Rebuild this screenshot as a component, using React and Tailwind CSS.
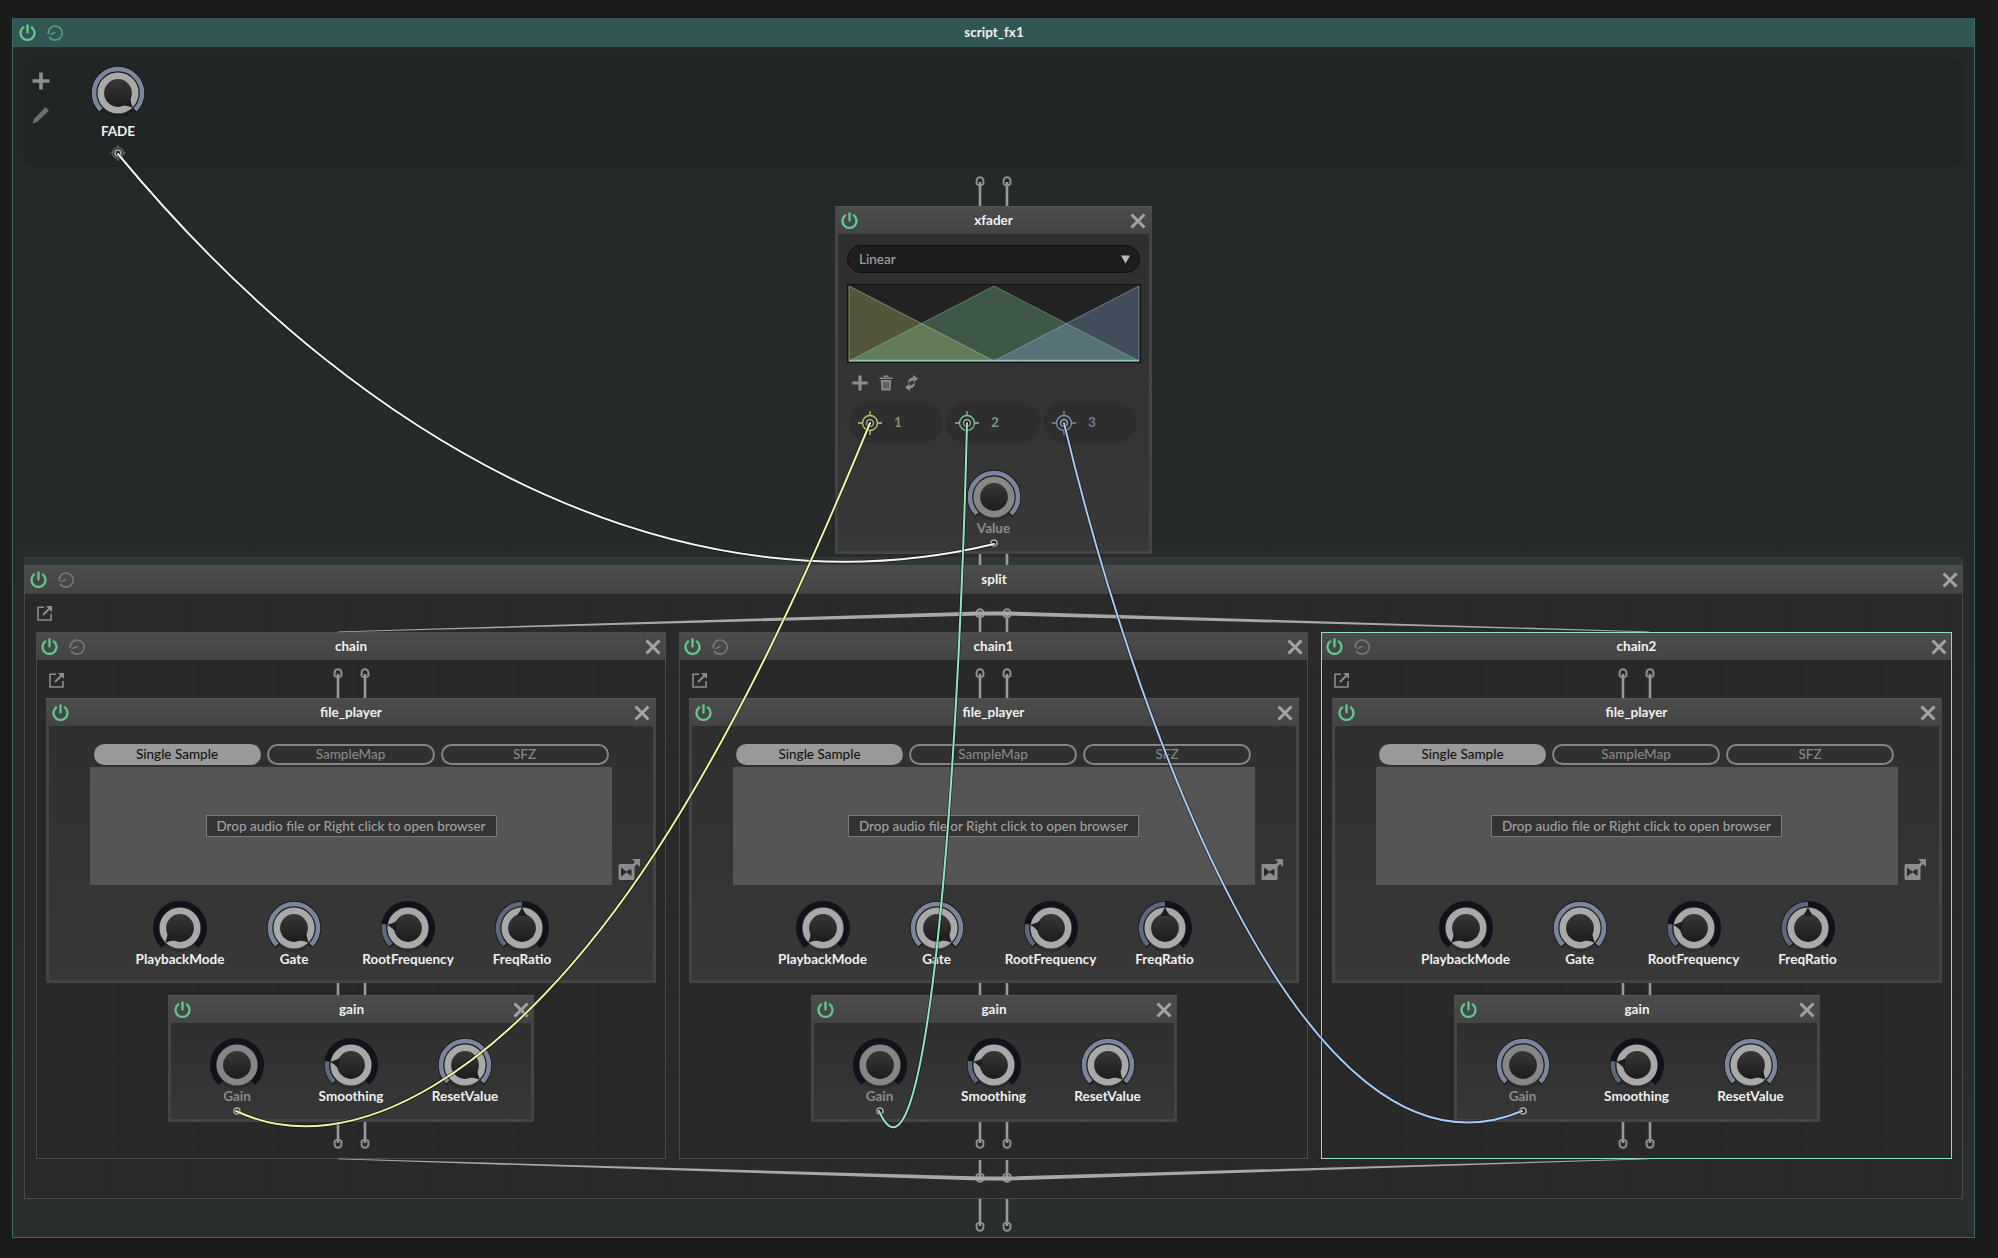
import React, { useId } from "react";

const polar = (r, deg) => {
  const a = ((deg - 90) * Math.PI) / 180;
  return [27 + r * Math.cos(a), 27 + r * Math.sin(a)];
};
const arc = (r, from, to) => {
  const [x1, y1] = polar(r, from);
  const [x2, y2] = polar(r, to);
  return `M${x1} ${y1}A${r} ${r} 0 ${to - from > 180 ? 1 : 0} 1 ${x2} ${y2}`;
};

function KnobDial({ value, mod }) {
  const id = useId();
  const end = -135 + 270 * value;
  const ring = mod ? "#868686" : "#a9a9a9";
  const wedge = () => {
    const [x1, y1] = polar(13, end - 24);
    const [x2, y2] = polar(13, end + 24);
    const [x3, y3] = polar(21, end);
    return `M${x1} ${y1}Q${polar(17, end - 5).join(" ")} ${x3} ${y3}Q${polar(17, end + 5).join(" ")} ${x2} ${y2}Z`;
  };
  return (
    <svg width="54" height="54" viewBox="0 0 54 54" className="block">
      <defs>
        <linearGradient id={id} x1="0" y1="0" x2="0" y2="1">
          <stop offset="0" stopColor="#3b3b3b" />
          <stop offset="1" stopColor="#191919" />
        </linearGradient>
      </defs>
      <circle cx="27" cy="28.5" r="22.5" fill="#000" opacity="0.16" />
      <path d={arc(24, -138, 138)} fill="none" stroke="#12131a" strokeWidth="6" />
      {value > 0.001 && <path d={arc(24, -135, end)} fill="none" stroke={value > 0.9 ? "#7c859b" : "#5f677c"} strokeWidth="4.6" />}
      <circle cx="27" cy="27" r="20.5" fill="#202020" />
      <circle cx="27" cy="27" r="17.2" fill={`url(#${id})`} stroke={ring} strokeWidth="6.6" />
      {!mod && <path d={wedge()} fill="#1f1f1f" />}
    </svg>
  );
}

function ModPin({ small }) {
  return (
    <svg width="16" height="16" viewBox="0 0 16 16" className="block">
      {!small && (
        <g stroke="#6a6a6a" strokeWidth="1.2" fill="none">
          <circle cx="8" cy="8" r="5.5" />
          <path d="M8 0v3M8 13v3M0 8h3M13 8h3" />
        </g>
      )}
      <circle cx="8" cy="8" r="3" fill="#222" stroke="#aaa" strokeWidth="1.6" />
    </svg>
  );
}

function Knob({ label, value, mod, pin, w = "w-[114px]" }) {
  return (
    <div className={`${w} flex flex-col items-center`}>
      <KnobDial value={value} mod={mod} />
      <div className={`-mt-[4px] h-[16px] text-[13.5px] leading-[16px] font-bold whitespace-nowrap ${mod ? "text-[#8b8b8b]" : "text-[#f0f0f0]"}`}>{label}</div>
      {pin && <div className="-mt-[1px] h-[16px]"><ModPin small /></div>}
    </div>
  );
}

function Pin({ len, ring = "top" }) {
  const top = ring === "top";
  return (
    <svg width="12" height={len} viewBox={`0 0 12 ${len}`} className="block">
      <path d={top ? `M6 6V${len}` : `M6 0V${len - 6}`} stroke="#9a9a9a" strokeWidth="2.6" />
      <path
        d={top ? "M6 10L2.6 8V4.6a3.4 3.4 0 0 1 6.8 0V8Z" : `M6 ${len - 10}L2.6 ${len - 8}V${len - 4.6}a3.4 3.4 0 0 0 6.8 0V${len - 8}Z`}
        fill="none"
        stroke="#8f8f8f"
        strokeWidth="2"
        strokeLinejoin="round"
      />
    </svg>
  );
}

const Stems = ({ len }) => (
  <div className="flex justify-center gap-[15px]">
    <svg width="12" height={len} className="block"><path d={`M6 0V${len}`} stroke="#9a9a9a" strokeWidth="2.6" /></svg>
    <svg width="12" height={len} className="block"><path d={`M6 0V${len}`} stroke="#9a9a9a" strokeWidth="2.6" /></svg>
  </div>
);
const Pins = ({ len, ring }) => (
  <div className="flex justify-center gap-[15px]">
    <Pin len={len} ring={ring} />
    <Pin len={len} ring={ring} />
  </div>
);

const PowerIcon = () => (
  <svg width="17" height="17" viewBox="0 0 17 17" fill="none" stroke="#5fca8c" strokeWidth="2.3" strokeLinecap="round" className="block shrink-0">
    <path d="M8.5 1.5V8.5" />
    <path d="M12.8 3.4a7 7 0 1 1-8.6 0" />
  </svg>
);
const ClockIcon = ({ c = "#7b7b7b" }) => (
  <svg width="17" height="17" viewBox="0 0 17 17" fill="none" stroke={c} strokeWidth="1.5" strokeLinecap="round" className="block shrink-0">
    <path d="M3.5 13.2A7 7 0 1 0 2.2 9.6" />
    <path d="M8.8 8.6L4.6 10.4" />
  </svg>
);
const CloseIcon = () => (
  <svg width="16" height="16" viewBox="0 0 16 16" stroke="#a3a3a3" strokeWidth="3" className="block">
    <path d="M1.5 1.5L14.5 14.5M14.5 1.5L1.5 14.5" />
  </svg>
);
const PopIcon = () => (
  <svg width="16" height="16" viewBox="0 0 16 16" fill="none" stroke="#8d8d8d" strokeWidth="1.6" className="block">
    <path d="M7 2.2H1v12.8h13V9" />
    <path d="M6 10L13.5 2.5" strokeWidth="2" />
    <path d="M9 1h6v6z" fill="#8d8d8d" stroke="none" />
  </svg>
);
const FileIcon = () => (
  <svg width="22" height="22" viewBox="0 0 22 22" className="block">
    <rect x="0.5" y="5" width="16" height="16" rx="1.5" fill="#8c8c8c" />
    <path d="M3 8.5L9 13 3 17.5z" fill="#2b2b2b" />
    <path d="M8 13l5.5-4v8z" fill="#2b2b2b" />
    <path d="M12 10L19 3" stroke="#8c8c8c" strokeWidth="2.8" />
    <path d="M14 0h8v8z" fill="#8c8c8c" />
  </svg>
);
const PlusIcon = ({ s = 18 }) => (
  <svg width={s} height={s} viewBox="0 0 18 18" stroke="#8e8e8e" strokeWidth="3.6" className="block">
    <path d="M9 0.5V17.5M0.5 9H17.5" />
  </svg>
);
const PencilIcon = () => (
  <svg width="18" height="18" viewBox="0 0 18 18" className="block">
    <path d="M13.5 1L17 4.5 5 16 0.5 17.5 2 13z" fill="#6f6f6f" />
  </svg>
);
const TrashIcon = () => (
  <svg width="14" height="16" viewBox="0 0 14 16" className="block" fill="#8c8c8c">
    <path d="M0.5 2.5h13v1.6H0.5zM4.5 0.5h5v1.6h-5z" />
    <path d="M1.8 5h10.4l-.6 10.5H2.4zM4.4 7v6.5h1V7zM6.5 7v6.5h1V7zM8.6 7v6.5h1V7z" fillRule="evenodd" />
  </svg>
);
const SwapIcon = () => (
  <svg width="15" height="16" viewBox="0 0 15 16" className="block" fill="#8c8c8c">
    <path d="M9 0l5 3.5-4.5 4V5.3C7 5.5 5 7 4.5 9 3.5 5.5 5.5 3 9 2.6z" />
    <path d="M6 16L1 12.5l4.5-4v2.2c2.5-.2 4.5-1.7 5-3.7 1 3.5-1 6-4.5 6.4z" />
  </svg>
);

const Target = ({ c }) => (
  <svg width="24" height="24" viewBox="0 0 24 24" fill="none" className="block">
    <g stroke={c} strokeWidth="1.3">
      <circle cx="12" cy="12" r="7.5" />
      <path d="M12 0v5M12 19v5M0 12h5M19 12h5" />
    </g>
    <circle cx="12" cy="12" r="3.4" fill="#1f1f1f" stroke="#9c9c9c" strokeWidth="1.6" />
  </svg>
);

const grid = "bg-[linear-gradient(#00000016_1px,transparent_1px),linear-gradient(90deg,#00000016_1px,transparent_1px)] bg-[size:80px_80px]";

function Header({ title, clock, close, clockColor, bg = "bg-[linear-gradient(#4c4c4c,#444444)]", h = "h-[27px]", pad = "pl-[6px]", pr = "pr-[5px]", extra = "" }) {
  return (
    <div className={`${h} ${bg} ${pad} ${pr} ${extra} grid grid-cols-[1fr_auto_1fr] items-center shrink-0`}>
      <div className="flex items-center gap-[10px]">
        <PowerIcon />
        {clock && <ClockIcon c={clockColor} />}
      </div>
      <div className="text-[13.5px] font-bold text-[#f1f1f1] leading-none">{title}</div>
      <div className="flex justify-end">{close && <CloseIcon />}</div>
    </div>
  );
}

function Gain({ gain, mod }) {
  return (
    <div className="w-[366px] h-[126px] mx-auto flex flex-col border-t border-[#555555] shrink-0">
      <Header title="gain" close />
      <div className="flex-1 border-[3px] border-t-0 border-[#454545] bg-[linear-gradient(#2f2f2f,#373737)] pt-[15px] flex justify-center">
        <Knob label="Gain" value={gain} mod={mod} pin />
        <Knob label="Smoothing" value={0.2} />
        <Knob label="ResetValue" value={1} />
      </div>
    </div>
  );
}

function FilePlayer() {
  return (
    <div className="w-[610px] h-[285px] mx-auto flex flex-col border-t border-[#555555] shrink-0">
      <Header title="file_player" close pr="pr-[6px]" />
      <div className="flex-1 border-[3px] border-t-0 border-[#454545] bg-[linear-gradient(#2f2f2f,#383838)] flex flex-col items-center pt-[18px]">
        <div className="flex gap-[6px] h-[21px] text-[13.5px] font-medium leading-none">
          <div className="w-[167px] rounded-full bg-[#999999] text-[#151515] flex items-center justify-center">Single Sample</div>
          <div className="w-[168px] rounded-full border-2 border-[#858585] text-[#868686] flex items-center justify-center">SampleMap</div>
          <div className="w-[168px] rounded-full border-2 border-[#858585] text-[#868686] flex items-center justify-center">SFZ</div>
        </div>
        <div className="w-full flex items-end gap-[6px] pl-[41px] mt-[2px]">
          <div className="w-[522px] h-[118px] bg-[#555555] flex items-center justify-center shrink-0">
            <div className="w-[291px] h-[22px] pt-[1px] bg-[#333333] border border-[#7a7a7a] text-[#a0a0a0] text-[13.5px] font-medium leading-none flex items-center justify-center">Drop audio file or Right click to open browser</div>
          </div>
          <div className="mb-[4px]"><FileIcon /></div>
        </div>
        <div className="flex mt-[16px]">
          <Knob label="PlaybackMode" value={0} />
          <Knob label="Gate" value={1} />
          <Knob label="RootFrequency" value={0.2} />
          <Knob label="FreqRatio" value={0.5} />
        </div>
      </div>
    </div>
  );
}

function Chain({ title, gain, selected, w = "w-[630px]" }) {
  return (
    <div className={`${w} h-[527px] flex flex-col shrink-0 border ${selected ? "border-[#8fe3b3]" : "border-[#4b4b4b] border-t-0"}`}>
      <Header title={title} clock close h={selected ? "h-[27px]" : "h-[28px]"} pad="pl-[4px]" pr="pr-[4px]" extra={selected ? "" : "pt-[1px]"} />
      <div className={`flex-1 bg-[#292929] ${grid} flex flex-col`}>
        <div className="h-[38px] grid grid-cols-[1fr_auto_1fr] items-end shrink-0">
          <div className="pl-[12px] pb-[10px]"><PopIcon /></div>
          <Pins len={30} />
          <div />
        </div>
        <FilePlayer />
        <Stems len={12} />
        <Gain gain={gain} mod />
        <div className="mt-[1px]"><Pins len={27} ring="bottom" /></div>
      </div>
    </div>
  );
}

function XFader() {
  const pills = [
    ["1", "#c3c76f", "#8c9162"],
    ["2", "#7dc79a", "#6c9c7f"],
    ["3", "#7b92b8", "#6a7d98"],
  ];
  return (
    <div className="w-[317px] h-[348px] ml-[822px] flex flex-col border-t border-[#555555] shrink-0">
      <Header title="xfader" close pr="pr-[6px]" />
      <div className="flex-1 border-[3px] border-t-0 border-[#454545] bg-[linear-gradient(#2f2f2f,#383838)] px-[9px] pt-[11px] flex flex-col">
        <div className="h-[28px] rounded-full bg-[#1e1e1e] border border-[#0f0f0f] flex items-center justify-between pl-[11px] pr-[9px] text-[13.5px] font-medium text-[#a0a0a0]">
          <span>Linear</span>
          <svg width="9" height="9" viewBox="0 0 9 9" className="block"><path d="M0 0.5h9L4.5 8.5z" fill="#bdbdbd" /></svg>
        </div>
        <svg width="294" height="79" viewBox="0 0 294 79" className="block mt-[11px]">
          <rect x="0" y="0" width="294" height="79" fill="#222222" stroke="#111111" strokeWidth="2" />
          <path d="M2 2L147 77H2Z" fill="#c8cc78" fillOpacity="0.3" stroke="#b9bd78" strokeOpacity="0.6" />
          <path d="M2 77L147 2L292 77Z" fill="#86d5a0" fillOpacity="0.3" stroke="#86d5a0" strokeOpacity="0.45" />
          <path d="M147 77L292 2V77Z" fill="#8fb4e6" fillOpacity="0.3" stroke="#8fb4e6" strokeOpacity="0.55" />
          <path d="M2 76.5H292" stroke="#8cc4b4" strokeWidth="1.6" />
        </svg>
        <div className="flex items-center gap-[11px] pl-[5px] mt-[12px] h-[16px]">
          <PlusIcon s={16} />
          <TrashIcon />
          <SwapIcon />
        </div>
        <div className="flex gap-[3px] mt-[11px] pl-[2px]">
          {pills.map(([n, c, t]) => (
            <div key={n} className="w-[94px] h-[41px] rounded-full bg-[#2e2e2e] flex items-center pl-[9px] gap-[12px]">
              <Target c={c} />
              <span className="text-[13.5px] font-bold" style={{ color: t }}>{n}</span>
            </div>
          ))}
        </div>
        <div className="flex justify-center mt-[27px]">
          <Knob label="Value" value={1} mod pin />
        </div>
      </div>
    </div>
  );
}

function Wire({ d, c }) {
  return (
    <g fill="none" strokeLinecap="round">
      <path d={d} stroke="#000" strokeOpacity="0.55" strokeWidth="3.4" />
      <path d={d} stroke={c} strokeWidth="2" />
    </g>
  );
}

export default function App() {
  return (
    <div className="relative w-[1998px] h-[1258px] overflow-hidden bg-[#1b1b1b] pt-[18px] pl-[12px] font-['Lato','Noto_Sans',sans-serif]">
      <div className="w-[1963px] h-[1220px] flex flex-col border border-t-0 border-[#3d6a67]">
        <Header title="script_fx1" clock clockColor="#4fa784" bg="bg-[#325654]" h="h-[29px]" pad="pl-[6px]" />
        <div className="flex-1 flex flex-col bg-[linear-gradient(#252828,#2a2e2e)]">
          <div className="mt-[11px] mx-[11px] h-[109px] rounded-xl bg-[#222525] flex shrink-0">
            <div className="w-[34px] pt-[14px] flex flex-col items-center gap-[16px]">
              <PlusIcon />
              <PencilIcon />
            </div>
            <div className="ml-[33px] pt-[8px] flex flex-col items-center w-[54px]">
              <KnobDial value={1} />
              <div className="mt-[3px] text-[13.5px] font-bold leading-[16px] text-[#f0f0f0]">FADE</div>
              <div className="mt-[6px]"><ModPin /></div>
            </div>
          </div>
          <div className="mt-[9px]"><Pins len={30} /></div>
          <XFader />
          <Stems len={3} />
          <div className="ml-[11px] w-[1939px] h-[8px] bg-[#323838] shrink-0"><Stems len={8} /></div>
          <div className="ml-[11px] w-[1939px] h-[634px] flex flex-col border border-t-0 border-[#4b4b4b] shrink-0">
            <Header title="split" clock close h="h-[29px]" pad="pl-[5px]" pr="pr-[4px]" />
            <div className={`flex-1 bg-[#2a2a2a] ${grid} flex flex-col`}>
              <div className="h-[38px] grid grid-cols-[1fr_auto_1fr] items-end shrink-0">
                <div className="pl-[12px] pb-[11px]"><PopIcon /></div>
                <Pins len={24} />
                <div />
              </div>
              <div className="flex gap-[13px] pl-[11px] pr-[10px]">
                <Chain title="chain" gain={0} />
                <Chain title="chain1" gain={0} w="w-[629px]" />
                <Chain title="chain2" gain={1} selected w="w-[631px]" />
              </div>
              <div className="mt-[1px]"><Pins len={23} ring="bottom" /></div>
            </div>
          </div>
          <Pins len={33} ring="bottom" />
        </div>
      </div>

      <svg viewBox="0 0 1998 1258" className="absolute inset-0 w-[1998px] h-[1258px] pointer-events-none">
        <g fill="#a8a8a8">
          <path d="M338 631.5L980 611.5L1007 611.5L1649 631.5V632.2L1007 615.5L980 615.5L338 632.2Z" />
          <path d="M338 1158.5L980 1176.5L1007 1176.5L1649 1158.5V1159.2L1007 1180.5L980 1180.5L338 1159.2Z" />
        </g>
        <Wire d="M118 154C380 470 700 615 994 544" c="#f4f4f4" />
        <Wire d="M870 423C809 571 742 719 655 853C510 1075 350 1165 236 1111" c="#eef5a0" />
        <Wire d="M967 423C958 800 925 1215 879 1111" c="#8fe8bb" />
        <Wire d="M1064 423C1130 700 1300 1205 1522 1111" c="#a5c8f5" />
      </svg>
    </div>
  );
}
